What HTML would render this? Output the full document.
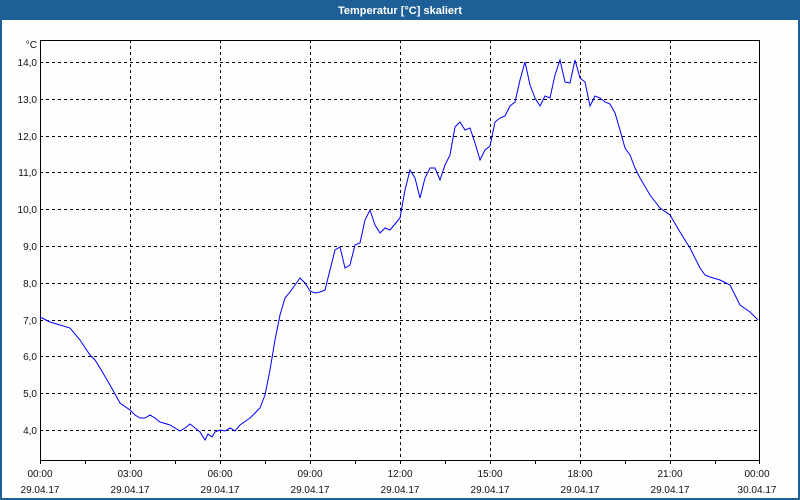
<!DOCTYPE html>
<html><head><meta charset="utf-8"><style>
html,body{margin:0;padding:0;}
body{width:800px;height:500px;overflow:hidden;background:#fdfefd;font-family:"Liberation Sans","DejaVu Sans",sans-serif;}
</style></head><body>
<svg width="800" height="500" xmlns="http://www.w3.org/2000/svg" style="display:block">
<rect x="0" y="0" width="800" height="500" fill="#1d5f96"/>
<rect x="2" y="20" width="796" height="478" fill="#fdfefd"/>
<text x="400" y="14" fill="#ffffff" font-size="11" font-weight="bold" text-anchor="middle">Temperatur [°C] skaliert</text>
<g stroke="#000" stroke-width="1" stroke-dasharray="3,3" shape-rendering="crispEdges">
<line x1="130.5" y1="40" x2="130.5" y2="460"/><line x1="220.5" y1="40" x2="220.5" y2="460"/>
<line x1="310.5" y1="40" x2="310.5" y2="460"/><line x1="400.5" y1="40" x2="400.5" y2="460"/>
<line x1="490.5" y1="40" x2="490.5" y2="460"/><line x1="580.5" y1="40" x2="580.5" y2="460"/>
<line x1="670.5" y1="40" x2="670.5" y2="460"/>
<line x1="40" y1="62.5" x2="760" y2="62.5"/><line x1="40" y1="99.5" x2="760" y2="99.5"/>
<line x1="40" y1="136.5" x2="760" y2="136.5"/><line x1="40" y1="172.5" x2="760" y2="172.5"/>
<line x1="40" y1="209.5" x2="760" y2="209.5"/><line x1="40" y1="246.5" x2="760" y2="246.5"/>
<line x1="40" y1="283.5" x2="760" y2="283.5"/><line x1="40" y1="320.5" x2="760" y2="320.5"/>
<line x1="40" y1="356.5" x2="760" y2="356.5"/><line x1="40" y1="393.5" x2="760" y2="393.5"/>
<line x1="40" y1="430.5" x2="760" y2="430.5"/>
</g>
<rect x="40.5" y="40.5" width="719" height="420" fill="none" stroke="#000" shape-rendering="crispEdges"/>
<g stroke="#000" shape-rendering="crispEdges">
<line x1="85.5" y1="460" x2="85.5" y2="464"/><line x1="130.5" y1="460" x2="130.5" y2="464"/>
<line x1="175.5" y1="460" x2="175.5" y2="464"/><line x1="220.5" y1="460" x2="220.5" y2="464"/>
<line x1="265.5" y1="460" x2="265.5" y2="464"/><line x1="310.5" y1="460" x2="310.5" y2="464"/>
<line x1="355.5" y1="460" x2="355.5" y2="464"/><line x1="400.5" y1="460" x2="400.5" y2="464"/>
<line x1="445.5" y1="460" x2="445.5" y2="464"/><line x1="490.5" y1="460" x2="490.5" y2="464"/>
<line x1="535.5" y1="460" x2="535.5" y2="464"/><line x1="580.5" y1="460" x2="580.5" y2="464"/>
<line x1="625.5" y1="460" x2="625.5" y2="464"/><line x1="670.5" y1="460" x2="670.5" y2="464"/>
<line x1="715.5" y1="460" x2="715.5" y2="464"/><line x1="40.5" y1="460" x2="40.5" y2="464"/>
<line x1="759.5" y1="460" x2="759.5" y2="464"/>
</g>
<g font-size="10" fill="#111" text-anchor="end">
<text x="37" y="48">°C</text>
<text x="37" y="66">14,0</text><text x="37" y="103">13,0</text><text x="37" y="140">12,0</text>
<text x="37" y="176">11,0</text><text x="37" y="213">10,0</text><text x="37" y="250">9,0</text>
<text x="37" y="287">8,0</text><text x="37" y="324">7,0</text><text x="37" y="360">6,0</text>
<text x="37" y="397">5,0</text><text x="37" y="434">4,0</text>
</g>
<g font-size="10" fill="#111" text-anchor="middle">
<text x="40" y="477">00:00</text><text x="130" y="477">03:00</text><text x="220" y="477">06:00</text>
<text x="310" y="477">09:00</text><text x="400" y="477">12:00</text><text x="490" y="477">15:00</text>
<text x="580" y="477">18:00</text><text x="670" y="477">21:00</text><text x="757" y="477">00:00</text>
<text x="40" y="493">29.04.17</text><text x="130" y="493">29.04.17</text><text x="220" y="493">29.04.17</text>
<text x="310" y="493">29.04.17</text><text x="400" y="493">29.04.17</text><text x="490" y="493">29.04.17</text>
<text x="580" y="493">29.04.17</text><text x="670" y="493">29.04.17</text><text x="757" y="493">30.04.17</text>
</g>
<polyline fill="none" stroke="#0000ff" stroke-width="1" points="40,317 50,322 60,325 70,328 80,340 90,355 95,360 100,368 110,385 120,403 130,410 135,415 140,418 145,418 150,415 155,418 160,422 170,425 180,431 185,428 190,424 195,428 200,432 205,440 208,434 212,437 215,432 220,430 225,431 230,428 235,431 240,425 250,418 260,408 265,395 270,370 275,340 280,315 285,298 290,292 295,285 300,278 305,283 310,291 315,293 320,292 325,290 330,270 335,250 340,247 345,268 350,265 355,245 360,243 365,220 370,210 375,225 380,233 385,228 390,230 395,224 400,218 405,190 410,170 415,178 420,198 425,178 430,168 435,168 440,180 445,165 450,155 455,127 460,122 465,130 470,128 475,143 480,160 485,150 490,146 495,122 500,118 505,116 510,106 515,102 520,80 525,62 530,85 535,98 540,106 545,96 550,98 555,75 560,60 565,82 570,83 575,60 580,78 585,82 590,106 595,96 600,98 605,102 610,104 615,113 620,130 625,148 630,155 635,168 640,178 650,195 660,208 670,215 680,232 690,248 700,268 705,275 710,277 720,280 730,285 740,305 750,312 758,320"/>
</svg>
</body></html>
